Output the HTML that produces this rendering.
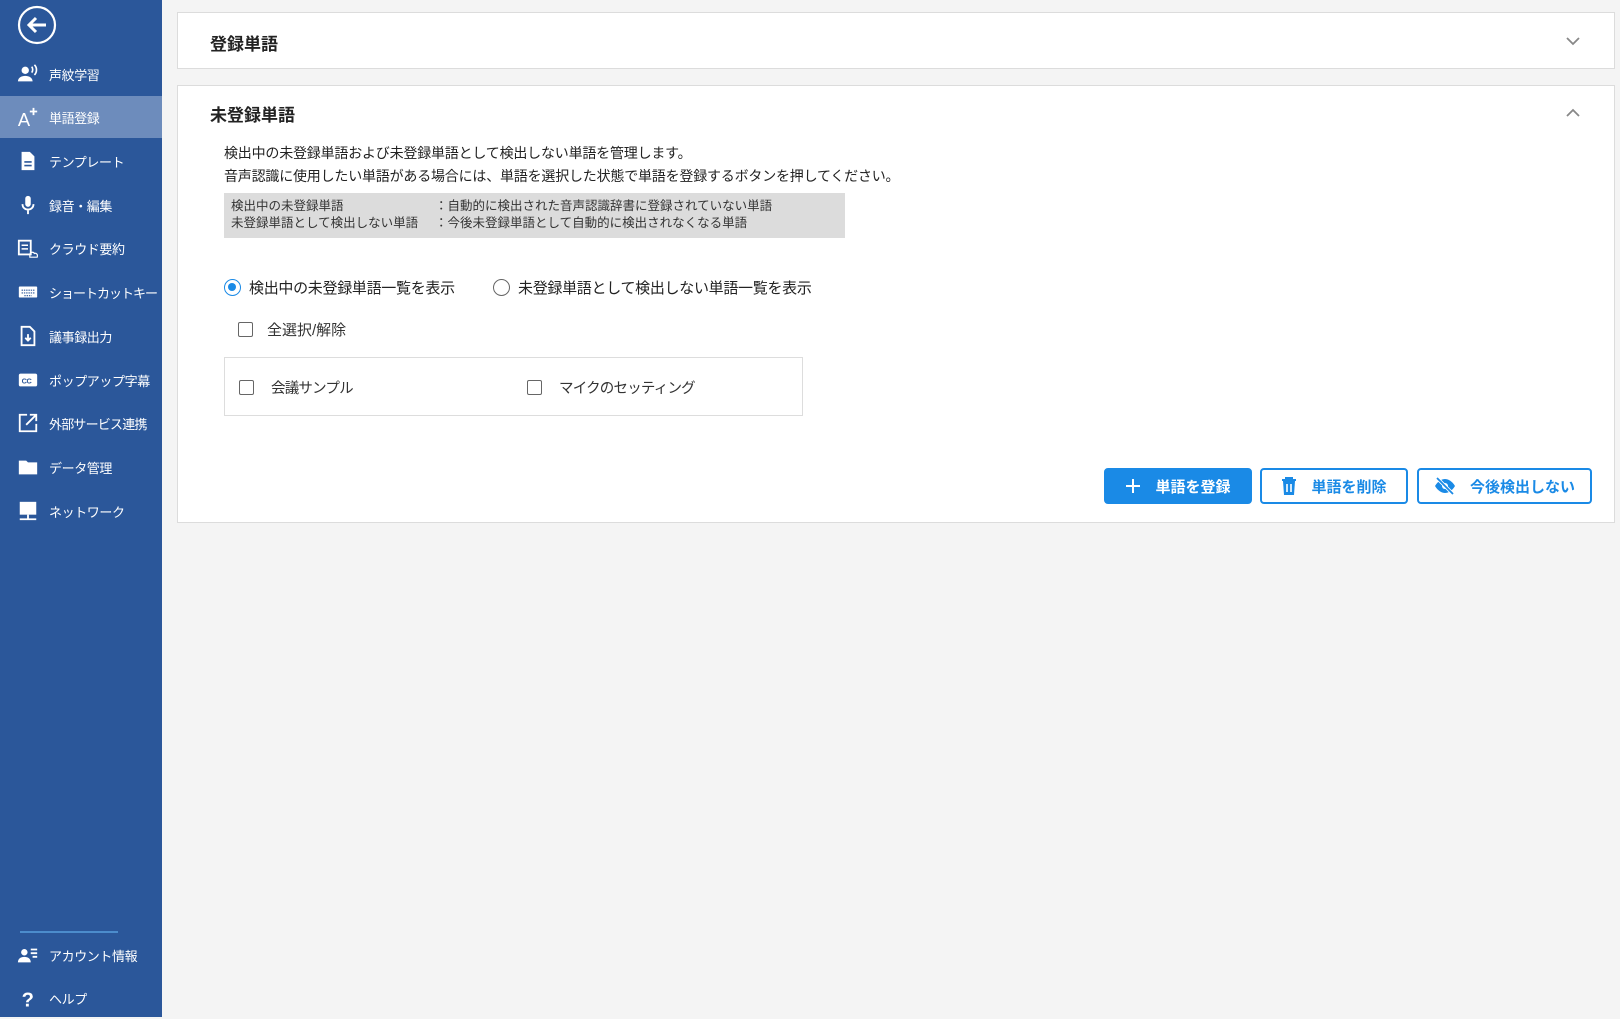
<!DOCTYPE html>
<html><head><meta charset="utf-8"><style>
*{box-sizing:border-box;margin:0;padding:0}
body{width:1620px;height:1017px;background:#f4f4f4;font-family:"Liberation Sans","Noto Sans CJK JP",sans-serif;position:relative;overflow:hidden;color:#222}
.sb{position:absolute;left:0;top:0;width:162px;height:1017px;background:#2b579a;color:#fff}
.it{position:absolute;left:0;width:162px;height:42px;display:flex;align-items:center;font-size:13px;white-space:nowrap;letter-spacing:-0.4px}
.it svg{position:absolute;left:17px;width:22px;height:22px}
.it span{position:absolute;left:49px}
.act{background:#6d8cbc}
.card{position:absolute;left:177px;width:1438px;background:#fff;border:1px solid #dcdcdc}
.t{position:absolute;left:32px;font-size:17px;font-weight:bold;color:#222}
.chev{position:absolute;right:34px;width:14px;height:14px}
.desc{position:absolute;left:46px;font-size:14px;line-height:23px;color:#222;letter-spacing:-0.2px;white-space:nowrap}
.gray{position:absolute;left:46px;top:107px;width:621px;height:45px;background:#dcdcdc;font-size:12.5px;line-height:17px;padding:5px 7px;color:#333;white-space:nowrap}
.gray b{font-weight:normal;display:inline-block;width:204px}
.rad{position:absolute;top:191px;font-size:15px;display:flex;align-items:center;letter-spacing:-0.3px}
.rc{width:17px;height:17px;border-radius:50%;border:1.5px solid #666;margin-right:8px;position:relative}
.rc.on{border-color:#1a8ae6}
.rc.on:after{content:"";position:absolute;left:3px;top:3px;width:8px;height:8px;border-radius:50%;background:#1a8ae6}
.cb{width:15px;height:15px;border:1.5px solid #666;border-radius:2px;display:inline-block;margin-right:14px}
.row{position:absolute;font-size:15px;display:flex;align-items:center;color:#333;white-space:nowrap}
.list{position:absolute;left:46px;top:271px;width:579px;height:59px;border:1.5px solid #ddd}
.list .row{font-size:14.5px;letter-spacing:-0.8px}
.btn{position:absolute;top:382px;height:36px;border:2px solid #1a8ae6;border-radius:4px;color:#1a8ae6;font-size:15px;font-weight:bold;display:flex;align-items:center;justify-content:center;gap:14px}
.btn.p{background:#1a8ae6;color:#fff}
</style></head><body>
<div class="sb">
<svg style="position:absolute;left:17px;top:5px" width="40" height="40" viewBox="0 0 40 40"><circle cx="20" cy="20" r="18" fill="none" stroke="#fff" stroke-width="2.2"/><path d="M29 20H12M19 13l-7 7 7 7" fill="none" stroke="#fff" stroke-width="3"/></svg>
<div class="it" style="top:53px"><svg viewBox="0 0 24 24"><circle cx="9" cy="8" r="4" fill="#fff"/><path d="M1 20c0-4 4-6 8-6s8 2 8 6z" fill="#fff"/><path d="M16 4c1.5 1.5 1.5 5 0 6.5M19 2c3 3 3 8 0 11" fill="none" stroke="#fff" stroke-width="1.8"/></svg><span>声紋学習</span></div>
<div class="it act" style="top:96px"><svg viewBox="0 0 24 24"><text x="1" y="22" font-size="20" fill="#fff" font-family="Liberation Sans">A</text><path d="M18 2v8M14 6h8" stroke="#fff" stroke-width="2"/></svg><span>単語登録</span></div>
<div class="it" style="top:140px"><svg viewBox="0 0 24 24"><path d="M5 2h9l5 5v15H5z" fill="#fff"/><path d="M8 13h8M8 17h8" stroke="#2b579a" stroke-width="1.8"/></svg><span>テンプレート</span></div>
<div class="it" style="top:184px"><svg viewBox="0 0 24 24"><rect x="9" y="2" width="6" height="12" rx="3" fill="#fff"/><path d="M6 11c0 4 3 6 6 6s6-2 6-6M12 17v5" fill="none" stroke="#fff" stroke-width="2"/></svg><span>録音・編集</span></div>
<div class="it" style="top:227px"><svg viewBox="0 0 24 24"><rect x="2" y="4" width="13" height="15" fill="none" stroke="#fff" stroke-width="2"/><path d="M5 9h7M5 13h7" stroke="#fff" stroke-width="1.6"/><path d="M14 22h8c1-3-1-5-3-4-1-2-4-2-5 1z" fill="none" stroke="#fff" stroke-width="1.3"/></svg><span>クラウド要約</span></div>
<div class="it" style="top:271px"><svg viewBox="0 0 24 24"><rect x="2" y="6" width="20" height="12" rx="1" fill="#fff"/><path d="M5 10h14M5 13h14M8 16h8" stroke="#2b579a" stroke-width="1.2" stroke-dasharray="1.5 1"/></svg><span style="letter-spacing:-1px">ショートカットキー</span></div>
<div class="it" style="top:315px"><svg viewBox="0 0 24 24"><path d="M5 2h9l5 5v15H5z" fill="none" stroke="#fff" stroke-width="2"/><path d="M12 10v7M9 14l3 3 3-3" fill="none" stroke="#fff" stroke-width="2"/></svg><span>議事録出力</span></div>
<div class="it" style="top:359px"><svg viewBox="0 0 24 24"><rect x="2" y="5" width="20" height="14" rx="2" fill="#fff"/><text x="5" y="16" font-size="8" font-weight="bold" fill="#2b579a" font-family="Liberation Sans">CC</text></svg><span>ポップアップ字幕</span></div>
<div class="it" style="top:402px"><svg viewBox="0 0 24 24"><path d="M11 3H3v18h18v-8" fill="none" stroke="#fff" stroke-width="2"/><path d="M10 14L21 3M14 3h7v7" fill="none" stroke="#fff" stroke-width="2"/></svg><span style="letter-spacing:-0.8px">外部サービス連携</span></div>
<div class="it" style="top:446px"><svg viewBox="0 0 24 24"><path d="M2 5h8l2 2h10v13H2z" fill="#fff"/></svg><span>データ管理</span></div>
<div class="it" style="top:490px"><svg viewBox="0 0 24 24"><rect x="3" y="2" width="18" height="14" fill="#fff"/><path d="M12 16v4M3 21h18" stroke="#fff" stroke-width="2"/></svg><span>ネットワーク</span></div>
<div style="position:absolute;left:20px;top:931px;width:98px;height:1.5px;background:#4c8ccc"></div>
<div class="it" style="top:934px"><svg viewBox="0 0 24 24"><circle cx="8" cy="9" r="3.5" fill="#fff"/><path d="M1 20c0-4 3-6 7-6s7 2 7 6z" fill="#fff"/><path d="M15 6h7M15 10h7M17 14h5" stroke="#fff" stroke-width="2"/></svg><span>アカウント情報</span></div>
<div class="it" style="top:977px"><svg viewBox="0 0 24 24"><text x="5" y="21" font-size="22" font-weight="bold" fill="#fff" font-family="Liberation Sans">?</text></svg><span>ヘルプ</span></div>
</div>

<div class="card" style="top:12px;height:57px">
<div class="t" style="top:17px">登録単語</div>
<svg class="chev" style="top:21px" viewBox="0 0 14 14"><path d="M1 4l6 6 6-6" fill="none" stroke="#888" stroke-width="1.8"/></svg>
</div>

<div class="card" style="top:85px;height:438px">
<div class="t" style="top:15px">未登録単語</div>
<svg class="chev" style="top:20px" viewBox="0 0 14 14"><path d="M1 10l6-6 6 6" fill="none" stroke="#888" stroke-width="1.8"/></svg>
<div class="desc" style="top:56px">検出中の未登録単語および未登録単語として検出しない単語を管理します。<br>音声認識に使用したい単語がある場合には、単語を選択した状態で単語を登録するボタンを押してください。</div>
<div class="gray"><b>検出中の未登録単語</b>：自動的に検出された音声認識辞書に登録されていない単語<br><b>未登録単語として検出しない単語</b>：今後未登録単語として自動的に検出されなくなる単語</div>
<div class="rad" style="left:46px"><span class="rc on"></span>検出中の未登録単語一覧を表示</div>
<div class="rad" style="left:315px"><span class="rc"></span>未登録単語として検出しない単語一覧を表示</div>
<div class="row" style="left:60px;top:233px"><span class="cb"></span>全選択/解除</div>
<div class="list">
<div class="row" style="left:14px;top:19px"><span class="cb" style="margin-right:17px"></span>会議サンプル</div>
<div class="row" style="left:302px;top:19px"><span class="cb" style="margin-right:17px"></span>マイクのセッティング</div>
</div>
<div class="btn p" style="left:926px;width:148px"><svg width="16" height="16" viewBox="0 0 16 16"><path d="M8 1v14M1 8h14" stroke="#fff" stroke-width="2"/></svg>単語を登録</div>
<div class="btn" style="left:1082px;width:148px"><svg width="16" height="18" viewBox="0 0 16 18"><path d="M1 3h14M5 3V1h6v2" stroke="#1a8ae6" stroke-width="2" fill="none"/><path d="M2 4h12l-1 14H3z" fill="#1a8ae6"/><path d="M6 7v8M10 7v8" stroke="#fff" stroke-width="1.6"/></svg>単語を削除</div>
<div class="btn" style="left:1239px;width:175px"><svg width="22" height="18" viewBox="0 0 22 18"><path d="M1 9c3-5 7-7 10-7s7 2 10 7c-3 5-7 7-10 7S4 14 1 9z" fill="#1a8ae6"/><circle cx="11" cy="9" r="3" fill="#fff"/><path d="M3 1l16 16" stroke="#fff" stroke-width="3.5"/><path d="M3 1l16 16" stroke="#1a8ae6" stroke-width="1.8"/></svg>今後検出しない</div>
</div>
</body></html>
